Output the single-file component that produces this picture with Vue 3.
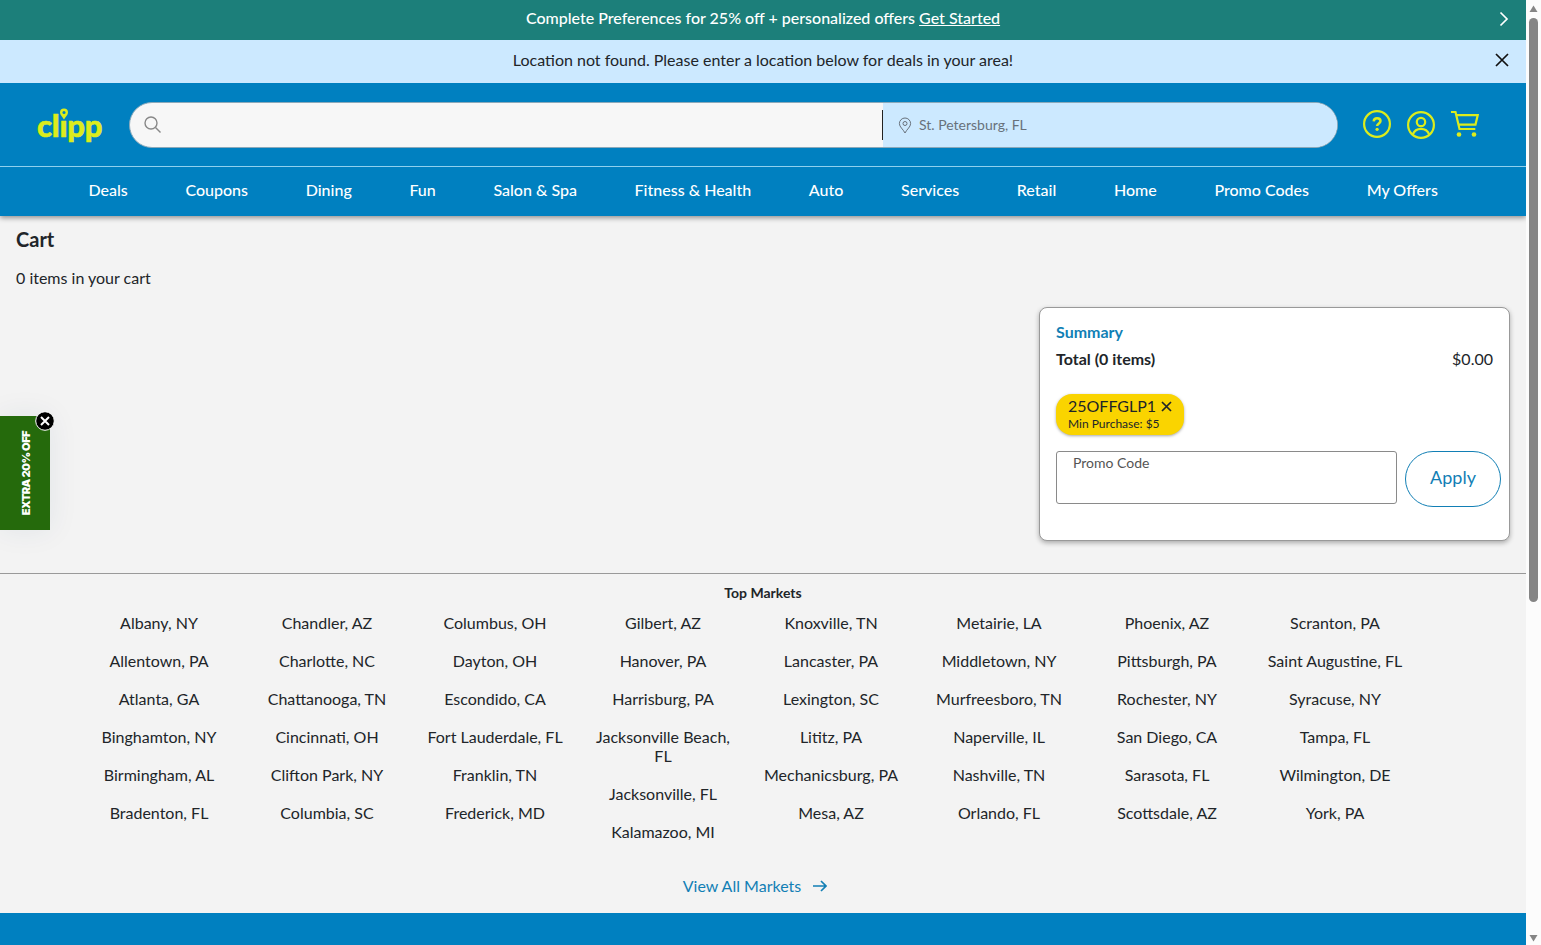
<script setup>
const nav = [
  'Deals', 'Coupons', 'Dining', 'Fun', 'Salon & Spa', 'Fitness & Health',
  'Auto', 'Services', 'Retail', 'Home', 'Promo Codes', 'My Offers',
]

const markets = [
  ['Albany, NY', 'Allentown, PA', 'Atlanta, GA', 'Binghamton, NY', 'Birmingham, AL', 'Bradenton, FL'],
  ['Chandler, AZ', 'Charlotte, NC', 'Chattanooga, TN', 'Cincinnati, OH', 'Clifton Park, NY', 'Columbia, SC'],
  ['Columbus, OH', 'Dayton, OH', 'Escondido, CA', 'Fort Lauderdale, FL', 'Franklin, TN', 'Frederick, MD'],
  ['Gilbert, AZ', 'Hanover, PA', 'Harrisburg, PA', 'Jacksonville Beach, FL', 'Jacksonville, FL', 'Kalamazoo, MI'],
  ['Knoxville, TN', 'Lancaster, PA', 'Lexington, SC', 'Lititz, PA', 'Mechanicsburg, PA', 'Mesa, AZ'],
  ['Metairie, LA', 'Middletown, NY', 'Murfreesboro, TN', 'Naperville, IL', 'Nashville, TN', 'Orlando, FL'],
  ['Phoenix, AZ', 'Pittsburgh, PA', 'Rochester, NY', 'San Diego, CA', 'Sarasota, FL', 'Scottsdale, AZ'],
  ['Scranton, PA', 'Saint Augustine, FL', 'Syracuse, NY', 'Tampa, FL', 'Wilmington, DE', 'York, PA'],
]
</script>

<template>
  <div class="window">
    <div class="page">
      <div class="promo">
        <span>Complete Preferences for 25% off + personalized offers <a>Get Started</a></span>
        <svg class="promo-next" width="10" height="16" viewBox="0 0 10 16"><path d="M1.5 1.5 8 8l-6.500 6.500" /></svg>
      </div>
      <div class="notice">
        <span>Location not found. Please enter a location below for deals in your area!</span>
        <svg class="notice-close" width="14" height="14" viewBox="0 0 14 14"><path d="M1 1l12 12M13 1 1 13" /></svg>
      </div>

      <header class="header">
        <div class="bar">
          <div class="logo">
            <span>clıpp</span>
            <svg class="logo-pin" width="10" height="13" viewBox="0 0 10 13">
              <path d="M5 0.500a4 4 0 0 1 4 4c0 2.500-2.300 4-4 7-1.700-3-4-4.500-4-7a4 4 0 0 1 4-4z" />
              <circle cx="5" cy="4.500" r="1.500" />
            </svg>
          </div>
          <div class="search">
            <div class="query">
              <svg width="18" height="18" viewBox="0 0 18 18"><circle cx="7" cy="7" r="6" /><path d="m11.500 11.500 5 5" /></svg>
            </div>
            <div class="place">
              <svg width="14" height="17" viewBox="0 0 14 17"><path d="M7 1a5.600 5.600 0 0 1 5.600 5.600C12.600 10 9 12 7 16 5 12 1.400 10 1.400 6.600A5.600 5.600 0 0 1 7 1z" /><circle cx="7" cy="6.500" r="2" /></svg>
              <span>St. Petersburg, FL</span>
            </div>
          </div>
          <div class="actions">
            <svg width="28" height="28" viewBox="0 0 28 28"><circle cx="14" cy="14" r="12.900" /><path class="thick" d="M10.700 11.300c.2-2 1.500-3 3.400-3 2 0 3.400 1.100 3.400 2.800 0 2.300-3.300 2.300-3.400 4.900" /><circle class="dot" cx="14.100" cy="19.300" r="1.600" /></svg>
            <svg class="user" width="28" height="28" viewBox="0 0 28 28"><circle cx="14" cy="14" r="12.900" /><circle cx="14" cy="11" r="4.200" /><path d="M5.800 23.500c1.400-3.600 4.300-5.600 8.200-5.600s6.800 2 8.200 5.600" /></svg>
            <svg width="28" height="28" viewBox="0 0 28 28"><path d="M0 2h4.500l4 17h15.800M5.200 5.200h21.500l-2.200 9.400H7.400" /><circle class="dot" cx="8" cy="24.500" r="2.300" /><circle class="dot" cx="23" cy="24.500" r="2.300" /></svg>
          </div>
        </div>
        <nav class="nav"><a v-for="n in nav" :key="n">{{ n }}</a></nav>
      </header>

      <main class="cart">
        <h1>Cart</h1>
        <p>0 items in your cart</p>
        <section class="summary">
          <h2>Summary</h2>
          <div class="total"><b>Total (0 items)</b><span>$0.00</span></div>
          <div class="chip">
            <div class="code">25OFFGLP1<svg width="11" height="11" viewBox="0 0 11 11"><path d="M1 1l9 9M10 1 1 10" /></svg></div>
            <small>Min Purchase: $5</small>
          </div>
          <div class="form">
            <div class="field">Promo Code</div>
            <button>Apply</button>
          </div>
        </section>
      </main>

      <section class="markets">
        <h3>Top Markets</h3>
        <div class="grid">
          <div v-for="(col, i) in markets" :key="i" class="col"><a v-for="m in col" :key="m">{{ m }}</a></div>
        </div>
        <a class="all">View All Markets<svg width="14" height="12" viewBox="0 0 14 12"><path d="M0 6h13M8 1l5 5-5 5" /></svg></a>
      </section>
      <footer class="footer"></footer>
    </div>

    <div class="scroll">
      <svg width="9" height="8" viewBox="0 0 9 8"><path d="M4.500 0.500 8.500 7h-8z" /></svg>
      <div class="thumb"></div>
      <svg class="down" width="9" height="8" viewBox="0 0 9 8"><path d="M.5 1h8l-4 6.500z" /></svg>
    </div>

    <div class="teaser">
      <span>EXTRA 20% OFF</span>
      <svg width="20" height="20" viewBox="0 0 20 20"><circle cx="10" cy="10" r="9.300" /><path d="m6 6 8 8M14 6l-8 8" /></svg>
    </div>
  </div>
</template>

<style>
body { margin: 0; overflow: hidden; }
</style>

<style scoped>
* { box-sizing: border-box; }
svg { flex: none; fill: none; stroke: currentColor; stroke-width: 1.7; }
.window { position: relative; display: flex; width: 1541px; height: 945px; overflow: hidden; background: #fcfcfc; font-family: Lato, sans-serif; font-size: 16px; color: #212529; white-space: nowrap; }
.page { width: 1526px; display: flex; flex-direction: column; background: #f3f3f3; }
.promo, .notice { position: relative; display: flex; justify-content: center; align-items: center; flex: none; }
.promo { height: 40px; padding-bottom: 5px; background: #1c7f7a; color: #fff; font-weight: 500; }
.promo a { text-decoration: underline; }
.promo-next { position: absolute; right: 17px; top: 11px; }
.notice { height: 43px; padding-bottom: 4px; background: #cce9ff; }
.notice-close { position: absolute; right: 17px; top: 13px; color: #111; }
.header { height: 133px; flex: none; background: #0080c0; box-shadow: 0 2px 5px rgba(0,0,0,.4); clip-path: inset(0 0 -12px 0); }
.bar { display: flex; height: 84px; border-bottom: 1px solid #8fd0ee; align-items: flex-start; }
.logo { position: relative; width: 66px; height: 40px; margin: 23px 26px 0 37px; color: #dcec1c; font: 900 31px/38px Lato, sans-serif; letter-spacing: -.2px; -webkit-text-stroke: .6px #dcec1c; }
.logo-pin { position: absolute; left: 22px; top: 2px; stroke: none; fill: #dcec1c; }
.logo-pin circle { fill: #0080c0; }
.search { width: 1209px; height: 46px; margin-top: 19px; display: flex; border: 1px solid #8ba9ba; border-radius: 23px; overflow: hidden; background: #f7f7f7; }
.query { width: 753px; padding: 13px 0 0 14px; color: #888; position: relative; }
.query::after { content: ''; position: absolute; right: 0; top: 7px; height: 30px; width: 1px; background: #222; }
.query svg { stroke-width: 1.400; }
.place { flex: 1; display: flex; align-items: center; padding-left: 15px; gap: 7px; background: #cce9ff; color: #68717b; font-size: 14px; }
.place svg { stroke-width: 1; }
.place span { padding-bottom: 2px; }
.actions { display: flex; gap: 16px; margin: 27px 0 0 25px; color: #dcec1c; }
.actions svg { stroke-width: 2.200; }
.actions .thick { stroke-width: 2.500; }
.actions .user { margin-top: 1px; }
.actions .dot { fill: currentColor; stroke: none; }
.nav { display: flex; justify-content: space-between; padding: 12px 88px 0 88.5px; line-height: 21px; color: #fff; font-weight: 500; }
.cart { height: 357px; flex: none; padding: 11px 16px 0; display: flex; flex-direction: column; }
h1 { margin: 0; font-size: 20px; line-height: 24px; font-weight: 700; }
p { margin: 16px 0 0; line-height: 22px; }
.summary { align-self: flex-end; width: 471px; height: 234px; margin-top: 18px; padding: 13px 16px; background: #fff; border: 1px solid #999; border-radius: 8px; box-shadow: 0 2px 5px rgba(0,0,0,.3); }
h2 { margin: 0; font-size: 16px; line-height: 22px; font-weight: 700; color: #127fb5; }
.total { display: flex; justify-content: space-between; margin-top: 5px; line-height: 22px; }
.total b { font-weight: 700; }
.chip { width: 128px; height: 41px; margin-top: 24px; padding: 2px 12px; border-radius: 16px; background: #fad400; box-shadow: 0 1px 3px rgba(0,0,0,.35); }
.code { display: flex; align-items: center; gap: 5px; line-height: 20px; }
small { display: block; margin-top: 1px; font-size: 12px; line-height: 14px; }
.form { display: flex; gap: 8px; margin-top: 16px; }
.field { width: 341px; height: 53px; flex: none; padding: 2px 16px; border: 1px solid #8a8a8a; border-radius: 3px; font-size: 14px; line-height: 18px; color: #555; }
button { width: 96px; height: 56px; flex: none; padding: 0 0 4px; border: 1px solid #127fb5; border-radius: 28px; background: #fff; color: #127fb5; font: 18px Lato, sans-serif; }
.markets { height: 340px; flex: none; border-top: 1px solid #999; display: flex; flex-direction: column; align-items: center; }
h3 { margin: 10px 0 0; font-size: 14px; line-height: 18px; font-weight: 700; }
.grid { display: grid; grid-template-columns: repeat(8, 168px); margin: 11px 32px 0 0; height: 240px; }
.col { display: flex; flex-direction: column; gap: 19px; padding: 0 16px; line-height: 19px; text-align: center; white-space: normal; }
.all { display: flex; align-items: center; gap: 12px; margin: 23px 16px 0 0; line-height: 20px; color: #127fb5; }
.footer { flex: 1; background: #0080c0; }
.scroll { width: 15px; display: flex; flex-direction: column; align-items: center; padding: 5px 0 3px; }
.scroll svg { fill: #858585; stroke: none; }
.thumb { width: 9px; height: 584px; margin-top: 5px; background: #858585; border-radius: 5px; }
.down { margin-top: auto; }
.teaser { position: absolute; left: 0; top: 416px; width: 50px; height: 114px; display: flex; align-items: center; justify-content: center; background: #256a0c; color: #fff; box-shadow: 0 0 30px rgba(0,60,100,.08); }
.teaser span { writing-mode: vertical-rl; transform: rotate(180deg); font: 900 11px Inter, sans-serif; letter-spacing: -.5px; margin-left: 2px; }
.teaser svg { position: absolute; left: 35px; top: -5px; }
.teaser circle { fill: #000; stroke-width: 1; }
.teaser path { stroke-width: 2; }
</style>
